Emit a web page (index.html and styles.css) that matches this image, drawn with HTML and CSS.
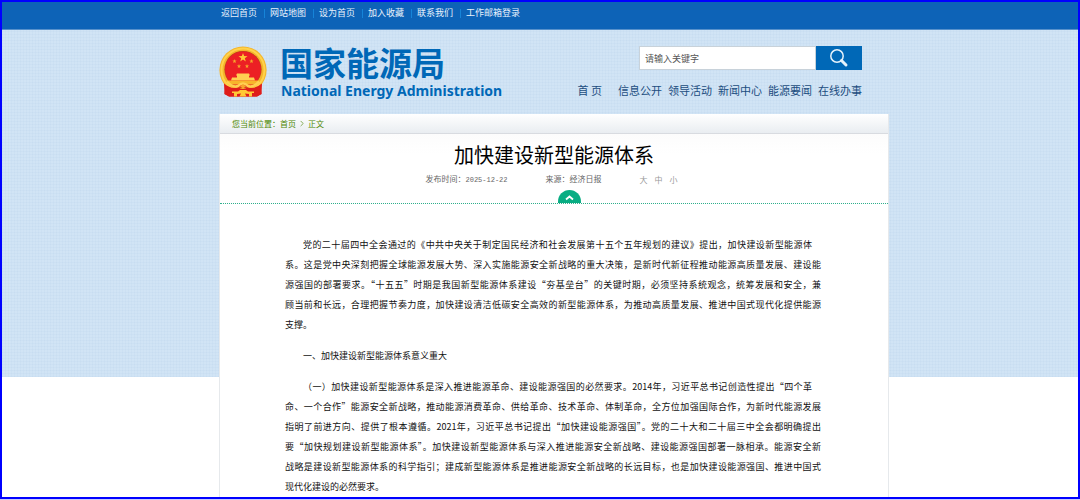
FILE: index.html
```html
<!DOCTYPE html>
<html lang="zh-CN">
<head>
<meta charset="utf-8">
<meta name="viewport" content="width=device-width, initial-scale=1">
<title>加快建设新型能源体系 - 国家能源局</title>
<link rel="stylesheet" href="styles.css">
</head>
<body>
<div class="topbar">
  <nav class="container toplinks" aria-label="快捷链接">
    <a href="#">返回首页</a><a href="#">网站地图</a><a href="#">设为首页</a><a href="#">加入收藏</a><a href="#">联系我们</a><a href="#">工作邮箱登录</a>
  </nav>
</div>
<div class="backdrop">
  <div class="container">
    <header class="header">
      <a class="brand" href="#">
        <svg class="emblem" viewBox="0 0 48 52" aria-hidden="true">
          <path d="M7 36 L5.500 48 L10 50.500 H38 L42.500 48 L41 36Z" fill="#d9191c"/>
          <circle cx="24" cy="24" r="23.600" fill="#f5b52b"/>
          <circle cx="24" cy="24" r="21.500" fill="none" stroke="#ffd24a" stroke-width="2"/>
          <circle cx="24" cy="23.500" r="18.600" fill="#b8471b"/>
          <circle cx="24" cy="23.500" r="18" fill="#ec2024"/>
          <path d="M24 7 l1.100 3.100 3.400 .1-2.700 2 1 3.200-2.800-1.900-2.800 1.900 1-3.200-2.700-2 3.400-.1z" fill="#ffc936"/>
          <g fill="#f7a52b"><path id="star" d="M15.500 13 l.6 1.400 1.500.1-1.200 1 .4 1.500-1.300-.8-1.300.8.4-1.500-1.200-1 1.500-.1z"/><use href="#star" x="17"/><use href="#star" x="4.500" y="5"/><use href="#star" x="12.500" y="5"/></g>
          <path d="M18 27.500h12l1 2h-1v2h5l1 3H12l1-3h5v-2h-1z" fill="#ffd052"/>
          <path d="M8 34.500h32l-2 4H10z" fill="#f7b52b"/>
          <path d="M5 37.500 Q13 44 19 41 Q24 45 29 41 Q35 44 43 37.500 L42.500 48 L38 50.500 H10 L5.500 48Z" fill="#df1d1a"/>
          <path d="M8 35.500 Q14 42 19 40 Q24 35 29 40 Q34 42 40 35.500" fill="none" stroke="#ffd052" stroke-width="2.500"/>
          <path d="M13 45.500h6l2-1.500h6l2 1.500h6v1.500h-2v3.500h-3v-2.500l-4-.5 1.500 3h-7l1.500-3-4 .5v2.500h-3v-3.500h-2z" fill="#ffc936"/>
          <path d="M24 38 l3 2.200-3 2.600-3-2.600z" fill="#f7a52b"/>
        </svg>
        <span class="names"><span class="name-zh">国家能源局</span><span class="name-en">National Energy Administration</span></span>
      </a>
      <div class="tools">
        <form class="search">
          <input type="text" aria-label="搜索" placeholder="请输入关键字">
          <button type="button" aria-label="搜索">
            <svg viewBox="0 0 20 20" aria-hidden="true"><circle cx="8" cy="8" r="6.200"/><path d="M12.500 12.500 L17 17" class="handle"/></svg>
          </button>
        </form>
        <nav class="mainnav" aria-label="主导航">
          <a class="home" href="#">首 页</a><a href="#">信息公开</a><a href="#">领导活动</a><a href="#">新闻中心</a><a href="#">能源要闻</a><a href="#">在线办事</a>
        </nav>
      </div>
    </header>
    <main class="panel">
      <nav class="crumbs" aria-label="当前位置">您当前位置：<a href="#">首页</a><svg viewBox="0 0 5 8" aria-hidden="true"><path d="M.8.8 L4 4 L.8 7.200"/></svg><span>正文</span></nav>
      <article>
        <div class="heading">
          <h1>加快建设新型能源体系</h1>
          <div class="meta">
            <span>发布时间：<time class="date">2025-12-22</time></span>
            <span>来源：经济日报</span>
            <span class="sizes"><button type="button">大</button><button type="button">中</button><button type="button">小</button></span>
          </div>
          <button class="fold" type="button" aria-label="收起"><svg viewBox="0 0 23 13" aria-hidden="true"><path d="M0 13 V11.500 A11.500 11.500 0 0 1 23 11.500 V13Z" fill="#08ad83"/><path d="M8 9.500 L11.500 6.500 L15 9.500" fill="none" stroke="#fff" stroke-width="1.800"/></svg></button>
        </div>
        <div class="text">
          <p>
            <span class="line opening">党的二十届四中全会通过的《中共中央关于制定国民经济和社会发展第十五个五年规划的建议》提出，加快建设新型能源体</span>
            <span class="line">系。这是党中央深刻把握全球能源发展大势、深入实施能源安全新战略的重大决策，是新时代新征程推动能源高质量发展、建设能</span>
            <span class="line">源强国的部署要求。“十五五”时期是我国新型能源体系建设“夯基垒台”的关键时期，必须坚持系统观念，统筹发展和安全，兼</span>
            <span class="line">顾当前和长远，合理把握节奏力度，加快建设清洁低碳安全高效的新型能源体系，为推动高质量发展、推进中国式现代化提供能源</span>
            <span class="line last">支撑。</span>
          </p>
          <p><span class="line opening last">一、加快建设新型能源体系意义重大</span></p>
          <p>
            <span class="line opening">（一）加快建设新型能源体系是深入推进能源革命、建设能源强国的必然要求。2014年，习近平总书记创造性提出“四个革</span>
            <span class="line">命、一个合作”能源安全新战略，推动能源消费革命、供给革命、技术革命、体制革命，全方位加强国际合作，为新时代能源发展</span>
            <span class="line">指明了前进方向、提供了根本遵循。2021年，习近平总书记提出“加快建设能源强国”。党的二十大和二十届三中全会都明确提出</span>
            <span class="line">要“加快规划建设新型能源体系”。加快建设新型能源体系与深入推进能源安全新战略、建设能源强国部署一脉相承。能源安全新</span>
            <span class="line">战略是建设新型能源体系的科学指引；建成新型能源体系是推进能源安全新战略的长远目标，也是加快建设能源强国、推进中国式</span>
            <span class="line last">现代化建设的必然要求。</span>
          </p>
        </div>
      </article>
    </main>
  </div>
</div>
</body>
</html>
```
FILE: styles.css
```css
* { box-sizing: border-box; }
html { background: #c9c9ff; padding-bottom: 1px; }
body {
  margin: 0;
  min-height: calc(100vh - 1px);
  border: 2px solid #0000ff;
  background: #fff;
  font-family: "Noto Sans CJK SC", sans-serif;
  font-size: 9px;
  color: #222;
}
a { color: inherit; text-decoration: none; }
button { font: inherit; color: inherit; border: 0; padding: 0; background: none; cursor: pointer; }
.container { max-width: 698px; margin: 0 auto; padding-left: 28px; }

.topbar { background: #0d63b7; border-bottom: 1px solid #5791cb; color: #e8f2fc; }
.toplinks { display: flex; height: 27px; padding-top: 3px; line-height: 16px; }
.toplinks a { padding: 0 7px 0 6px; position: relative; }
.toplinks a:first-child { padding-left: 2px; }
.toplinks a + a::before {
  content: "";
  position: absolute;
  left: 0;
  top: 4px;
  height: 9px;
  border-left: 1px solid #1684d8;
}

.backdrop {
  background:
    repeating-linear-gradient(0deg, rgba(120, 160, 205, .05) 0 1px, transparent 1px 3px) top / 100% 347px no-repeat,
    repeating-linear-gradient(90deg, rgba(120, 160, 205, .05) 0 1px, transparent 1px 3px) top / 100% 347px no-repeat,
    linear-gradient(#d1e4f5, #d1e4f5) top / 100% 347px no-repeat;
}
.header { display: flex; justify-content: space-between; height: 84px; padding: 16px 27px 0 0; }
.brand { display: flex; gap: 13px; align-items: flex-start; color: #0068b7; }
.emblem { width: 48px; height: 52px; }
.names { display: flex; flex-direction: column; gap: 3px; white-space: nowrap; }
.name-zh { font-size: 33px; line-height: 33px; font-weight: 700; }
.name-en { font: 700 14px/18px "Noto Sans", "Open Sans", sans-serif; padding-left: 1px; }
.tools { display: flex; flex-direction: column; align-items: flex-end; gap: 12px; }
.search { display: flex; width: 223px; height: 24px; }
.search input {
  flex: 1;
  min-width: 0;
  border: 1px solid #c8d2da;
  padding: 0 5px;
  font: inherit;
  color: #555;
  background: #fff;
}
.search input::placeholder { color: #555; opacity: 1; }
.search button { width: 46px; background: #0068b7; display: grid; place-items: center; }
.search svg { width: 20px; height: 20px; fill: none; stroke: #e6f2fb; stroke-width: 1.5; }
.search .handle { stroke-width: 3; stroke-linecap: round; }
.mainnav { display: flex; gap: 6px; font-size: 11px; line-height: 16px; color: #1c4d80; white-space: nowrap; }
.mainnav .home { margin-right: 10px; }

.panel { background: #fff; border: 1px solid #e6e9ec; border-width: 0 1px; }
.crumbs {
  display: flex;
  align-items: center;
  height: 20px;
  padding-left: 12px;
  border-bottom: 1px solid #d8dbe0;
  background: linear-gradient(#fff, #e9edf1);
  font-size: 8px;
  color: #4c8600;
}
.crumbs svg { width: 4px; height: 7px; margin: 0 4px; fill: none; stroke: #6b9a33; }
.heading {
  display: flex;
  flex-direction: column;
  align-items: center;
  padding-top: 7px;
  border-bottom: 1px dotted #2fb08d;
  background: linear-gradient(#fcfcfc, #fff 20px);
}
h1 { margin: 0; font-size: 20px; line-height: 28px; font-weight: 400; color: #000; }
.meta { display: flex; gap: 38px; padding: 3px 5px 0 0; font-size: 8px; line-height: 14px; color: #666; }
.date { font: 7px/14px "Liberation Mono", monospace; }
.sizes { display: flex; gap: 7px; color: #999; }
.fold { margin: 3px 0 0 30px; width: 23px; height: 13px; }
.fold svg { display: block; }

.text { padding: 31px 67px 0 65px; line-height: 20px; color: #111; }
.text p { margin: 0 0 11px; }
.text p:last-child { margin-bottom: 0; }
.line { display: block; text-align: justify; text-align-last: justify; }
.line.opening { padding: 0 9px 0 18px; }
.line.last { text-align-last: left; }
```
